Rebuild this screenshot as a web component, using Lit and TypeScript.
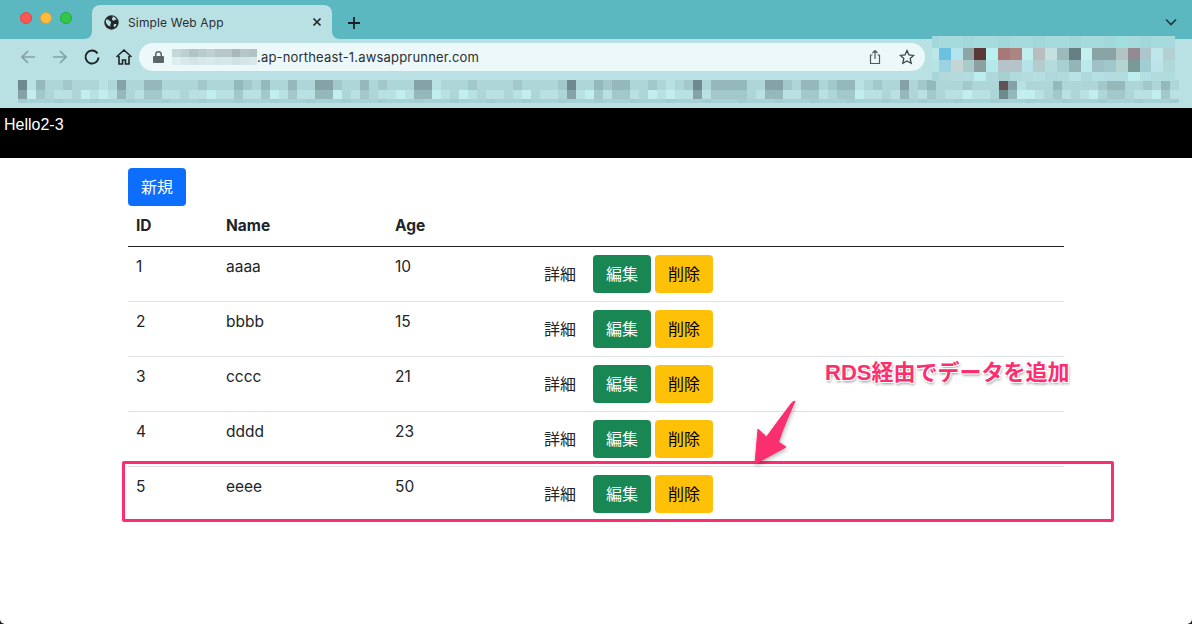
import { LitElement, html, css, svg } from "lit";
import { customElement } from "lit/decorators.js";

const LEVELS = ["#c2eef0", "#b9e1e4", "#aed5d8", "#a3c8cc", "#95b8bb", "#85a3a6", "#6e8a8d", "#5f5253"];
const DARK: Record<number, number> = {
  0: 6, 1: 1, 2: 4, 9: 1, 10: 2, 11: 5, 12: 2, 14: 4, 15: 4, 24: 4, 27: 4, 30: 4, 33: 5, 34: 5, 38: 4, 44: 5, 45: 5, 46: 1,
  61: 6, 64: 4, 66: 4, 67: 4, 72: 1, 74: 3, 75: 6, 77: 4, 78: 4, 79: 4, 80: 4, 83: 5, 84: 5, 87: 4, 88: 4,
  91: 4, 92: 4, 93: 1, 98: 5, 101: 4, 109: 7, 110: 5, 111: 1, 115: 4, 121: 4, 122: 4, 127: 4,
};
const COLS = Array.from({ length: 129 }, (_, i) => i);
const topColor = (i: number) => LEVELS[DARK[i] ?? (i % 5 === 0 ? 3 : 2)];
const bottomColor = (i: number) => {
  const d = DARK[i];
  if (d !== undefined && d >= 4) return LEVELS[Math.max(d - 1, 3)];
  return LEVELS[i % 7 === 0 || d === 1 ? 0 : i % 3 === 0 ? 2 : 1];
};
const stripColor = (i: number) => (i % 4 === 0 ? "#a3cdd0" : "#a8d2d5");

const AV_TOP = Array.from({ length: 21 }, (_, i) => (i === 16 ? "#9fe0de" : i % 3 === 0 ? "#a2d8dc" : "#a6dadd"));
const AV_A = ["#bde6e9", "#6cc1e3", "#b4e4ee", "#8ea3a3", "#5a3838", "#baf0f0", "#a87878", "#ac8484", "#c0eeee", "#b8bdbd", "#c5e0e2", "#9dbabb", "#667f82", "#c5eeee", "#8aa3a5", "#8aa3a5", "#b4c4c4", "#928a90", "#aec5cc", "#bfe6e8", "#b4d0d2"];
const AV_B = ["#b5e3e6", "#9dd2e3", "#c5d5d5", "#a8cccc", "#8da0a0", "#b4e8ea", "#b4c4c8", "#b4c4c8", "#b4e4e8", "#b4cccc", "#b4dcdf", "#a8d0d2", "#93b5b8", "#bce8ec", "#a0c0c8", "#a0c8cc", "#b4d4d0", "#7a9a98", "#a0ccd4", "#bce4e8", "#b0d8d8"];
const AV_C = ["#a8d5d8", "#b4d8da", "#b4dadc", "#b2dcdf", "#bcecee", "#b0d8da", "#a6cfd0", "#b0dadc", "#b4dcdf", "#b4e0e3", "#aed8dc", "#b0dadc", "#b8e2e6", "#aed8dc", "#b4e0e3", "#b2dcdf", "#b2dcdf", "#bcecec", "#b4e0e3", "#b0dcdc", "#b0dcdc"];

const ROWS = [
  { id: 1, name: "aaaa", age: 10 },
  { id: 2, name: "bbbb", age: 15 },
  { id: 3, name: "cccc", age: 21 },
  { id: 4, name: "dddd", age: 23 },
  { id: 5, name: "eeee", age: 50 },
];

@customElement("app-root")
export class AppRoot extends LitElement {
  static styles = css`
    :host { display: block; width: 1192px; height: 624px; background: #1a1a1a; overflow: hidden; position: relative; font-family: Inter, "Noto Sans CJK JP", sans-serif; }
    .window { height: 624px; background: #fff; border-radius: 0 0 5px 5px; overflow: hidden; }
    .tabs { height: 39px; background: #5bb8c1; display: flex; align-items: flex-end; position: relative; }
    .lights { display: flex; gap: 8px; padding: 12px 0 0 20px; align-self: flex-start; width: 72px; box-sizing: border-box; }
    .light { width: 12px; height: 12px; border-radius: 50%; box-sizing: border-box; flex: none; }
    .red { background: #fc5753; border: 1px solid #df4744; }
    .yellow { background: #fdbc40; border: 1px solid #de9f34; }
    .green { background: #33c748; border: 1px solid #27aa35; }
    .tab { width: 240px; height: 34px; background: #b9e1e4; border-radius: 8px 8px 0 0; display: flex; align-items: center; padding: 0 10px 0 12px; box-sizing: border-box; position: relative; font-size: 12px; color: #2a2f31; letter-spacing: 0.15px; }
    .tab-title { margin-left: 9px; flex: 1; }
    .flare { position: absolute; bottom: 0; width: 8px; height: 8px; }
    .flare.l { left: -8px; }
    .flare.r { right: -8px; }
    .new { margin: 0 0 8px 14px; width: 16px; height: 16px; }
    .chev { position: absolute; left: 1165px; top: 17px; width: 12px; height: 10px; }
    .toolbar { height: 39px; background: #b9e1e4; display: flex; align-items: flex-start; padding-top: 4px; box-sizing: border-box; }
    .navs { display: flex; width: 139px; padding-left: 12px; box-sizing: border-box; gap: 0; }
    .nav { width: 32px; height: 28px; display: flex; align-items: center; justify-content: center; flex: none; margin-right: 0; }
    .omni { width: 786px; height: 28px; background: #ecf8f9; border-radius: 14px; display: flex; align-items: center; padding: 0 10px 0 14px; box-sizing: border-box; font-size: 13px; color: #2a2f31; letter-spacing: 0.18px; }
    .lock { width: 11px; height: 12px; margin-right: 8px; flex: none; }
    .blur { display: grid; grid-template-columns: repeat(10, 8.5px); grid-template-rows: repeat(2, 8px); flex: none; }
    .blur i { display: block; }
    .url { flex: 1; }
    .omni-ic { width: 16px; height: 16px; margin-left: 16px; flex: none; }
    .bookmarks { height: 30px; background: #b9e1e4; padding: 2px 0 0 18px; box-sizing: border-box; position: relative; display: grid; grid-template-columns: repeat(129, 9px); grid-template-rows: 10px 9px 4px; align-content: start; }
    .bookmarks i { display: block; }
    .avatar { position: absolute; left: 932px; top: 36px; display: grid; grid-template-columns: 7px repeat(20, 11.8px); grid-template-rows: 12px 12px 12px 9px; }
    .avatar i { display: block; }
    .hello { height: 50px; background: #000; color: #fff; font: 16px/24px "Liberation Sans", Arial, sans-serif; padding: 5px 4px 0; box-sizing: border-box; }
    .content { padding: 10px 0 0 128px; width: 936px; box-sizing: content-box; color: #212529; font-size: 15.5px; line-height: 24px; }
    button { font: 16px/24px Inter, "Noto Sans CJK JP", sans-serif; height: 38px; width: 58px; padding: 0; border: 1px solid transparent; border-radius: 4px; flex: none; }
    .primary { background: #0d6efd; color: #fff; display: block; }
    .success { background: #198754; color: #fff; }
    .warning { background: #ffc107; color: #000; }
    .link { background: transparent; color: #212529; }
    table { border-collapse: collapse; width: 936px; table-layout: fixed; }
    th { text-align: left; font-weight: 700; padding: 8px; border-bottom: 1px solid #212529; }
    td { padding: 8px; border-bottom: 1px solid #dee2e6; vertical-align: top; }
    tr:last-child td { border-bottom: 0; }
    .acts { display: flex; gap: 4px; padding-left: 8px; }
    .mark-box { position: absolute; left: 122px; top: 461px; width: 992px; height: 61px; border: 3px solid #fb2e6f; border-radius: 2px; box-sizing: border-box; }
    .mark-arrow { position: absolute; left: 745px; top: 392px; width: 60px; height: 80px; overflow: visible; filter: drop-shadow(1px 2px 2px rgba(0,0,0,.28)); }
    .mark-text { position: absolute; left: 825px; top: 358px; font: 700 22px/30px "Liberation Sans", "Noto Sans CJK JP", sans-serif; color: #fb2e6f; white-space: nowrap; text-shadow: -1px -1px 0 #fff, 1px -1px 0 #fff, -1px 1px 0 #fff, 1px 1px 0 #fff, 1px 2px 3px rgba(0,0,0,.45); }
  `;

  private navIcon(d: string, color: string, w = 2) {
    return html`<div class="nav"><svg width="18" height="18" viewBox="0 0 18 18" fill="none" stroke=${color} stroke-width=${w}>${svg`<path d=${d}/>`}</svg></div>`;
  }

  render() {
    const blur = ["#c4d8da", "#bcd0d2", "#b0c4c6", "#b8cbcd", "#bed0d2", "#b6c8ca", "#b8c8ca", "#a9b9bb", "#b4c6c8", "#b0c2c4",
      "#dceeef", "#d6e8ea", "#d2e4e6", "#d6e8e9", "#daeaec", "#d4e6e8", "#d6e8ea", "#d0e2e4", "#d4e6e8", "#d6e8ea"];
    return html`
      <div class="window">
        <div class="tabs">
          <div class="lights"><span class="light red"></span><span class="light yellow"></span><span class="light green"></span></div>
          <div class="tab" style="margin-left:20px">
            <svg class="flare l" viewBox="0 0 8 8"><path d="M8 0V8H0C5 8 8 5 8 0Z" fill="#b9e1e4"/></svg>
            <svg width="15" height="15" viewBox="0 0 15 15"><circle cx="7.5" cy="7.5" r="7.2" fill="#24282b"/><path d="M2.2 4.5c1.6-.2 2.6.4 3.4 1.2.6.7 1.4.8 1.5 1.7.1.8-.8 1-.8 1.8 0 .8.4 1.6-.2 2.4C4.2 11 2 9 1.8 6.8c0-.8.1-1.5.4-2.3zM8.6 1.6c1.6.3 3.2 1.4 4 3-.8.3-1.8.1-2.2.7-.3.5-.9.6-1.4.1-.5-.6-1.400-.8-1-1.700.3-.7 1-.7.6-2.100z" fill="#b9e1e4"/><path d="M10 9.300c.8-.500 1.700-.500 2.500 0-.2 1.100-1 2.300-2.200 2.900-.6-.8-.9-2-.3-2.900z" fill="#b9e1e4"/></svg>
            <span class="tab-title">Simple Web App</span>
            <svg width="10" height="10" viewBox="0 0 10 10" stroke="#24282b" stroke-width="1.700"><path d="M1.500 1.500l7 7M8.500 1.500l-7 7"/></svg>
            <svg class="flare r" viewBox="0 0 8 8"><path d="M0 0V8H8C3 8 0 5 0 0Z" fill="#b9e1e4"/></svg>
          </div>
          <svg class="new" viewBox="0 0 16 16" stroke="#1c2022" stroke-width="1.800"><path d="M8 2v12M2 8h12"/></svg>
          <svg class="chev" viewBox="0 0 12 10" fill="none" stroke="#24363a" stroke-width="1.600"><path d="M1 2.500l5 5 5-5"/></svg>
        </div>
        <div class="toolbar">
          <div class="navs">
            ${this.navIcon("M16 9H3M9 3L3 9l6 6", "#84a0a4", 1.7)}
            ${this.navIcon("M2 9h13M9 3l6 6-6 6", "#84a0a4", 1.7)}
            ${this.navIcon("M14.500 5.500A6.500 6.500 0 1 0 15.500 9.500", "#1f2427", 1.9)}
            ${this.navIcon("M1.500 9L9 2l7.500 7M4 8v8h3.500v-4h3v4H14V8", "#1f2427", 1.6)}
          </div>
          <div class="omni">
            <svg class="lock" viewBox="0 0 11 12"><path d="M2 5V3.500a3.500 3.500 0 0 1 7 0V5h1a1 1 0 0 1 1 1v5a1 1 0 0 1-1 1H1a1 1 0 0 1-1-1V6a1 1 0 0 1 1-1zm1.500 0h4V3.500a2 2 0 0 0-4 0z" fill="#5a6668"/></svg>
            <span class="blur">${blur.map((c) => html`<i style="background:${c}"></i>`)}</span>
            <span class="url">.ap-northeast-1.awsapprunner.com</span>
            <svg class="omni-ic" viewBox="0 0 16 16" fill="none" stroke="#4c5a5c" stroke-width="1.200"><path d="M5.500 6H3.500v8.500h9V6h-2M8 10V1.500M5.500 4L8 1.500 10.500 4"/></svg>
            <svg class="omni-ic" viewBox="0 0 16 16" fill="none" stroke="#3a4648" stroke-width="1.300"><path d="M8 1.500l2 4.400 4.700.5-3.500 3.200 1 4.700L8 11.900l-4.200 2.400 1-4.700L1.300 6.400 6 5.900z"/></svg>
          </div>
        </div>
        <div class="bookmarks">
          ${COLS.map((i) => html`<i style="background:${topColor(i)}"></i>`)}
          ${COLS.map((i) => html`<i style="background:${bottomColor(i)}"></i>`)}
          ${COLS.map((i) => html`<i style="background:${stripColor(i)}"></i>`)}
        </div>
        <div class="hello">Hello2-3</div>
        <div class="content">
          <button class="primary">新規</button>
          <table>
            <colgroup><col style="width:90px" /><col style="width:169px" /><col style="width:128px" /><col /></colgroup>
            <thead><tr><th>ID</th><th>Name</th><th>Age</th><th></th></tr></thead>
            <tbody>
              ${ROWS.map((r) => html`<tr>
                <td>${r.id}</td><td>${r.name}</td><td>${r.age}</td>
                <td><div class="acts"><button class="link">詳細</button><button class="success">編集</button><button class="warning">削除</button></div></td>
              </tr>`)}
            </tbody>
          </table>
        </div>
      </div>
      <div class="avatar">
        ${AV_TOP.map((c) => html`<i style="background:${c}"></i>`)}
        ${AV_A.map((c) => html`<i style="background:${c}"></i>`)}
        ${AV_B.map((c) => html`<i style="background:${c}"></i>`)}
        ${AV_C.map((c) => html`<i style="background:${c}"></i>`)}
      </div>
      <div class="mark-box"></div>
      <svg class="mark-arrow" viewBox="0 0 60 80"><path d="M50 9C45 21 38 36 33.500 50L41 55 10 72 13 37 21.500 45C30 33 40 20 47 10.500Z" fill="#fb2e6f" stroke="#fb2e6f" stroke-width="1" stroke-linejoin="round"/></svg>
      <div class="mark-text">RDS経由でデータを追加</div>
    `;
  }
}
